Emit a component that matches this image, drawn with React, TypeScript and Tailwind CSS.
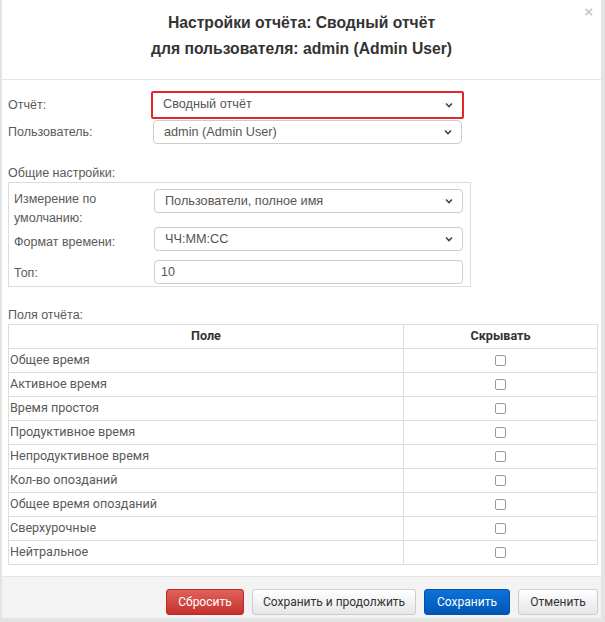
import React from "react";

const fields = [
  "Общее время",
  "Активное время",
  "Время простоя",
  "Продуктивное время",
  "Непродуктивное время",
  "Кол-во опозданий",
  "Общее время опозданий",
  "Сверхурочные",
  "Нейтральное",
];

function Chevron() {
  return (
    <svg width="10" height="10" viewBox="0 0 10 10" className="absolute right-[8px] top-1/2 -translate-y-1/2">
      <path d="M2 3.5 L5 6.5 L8 3.5" fill="none" stroke="#444" strokeWidth="1.6" />
    </svg>
  );
}

// select-like box
function SelectBox({ value, className = "" }: { value: string; className?: string }) {
  return (
    <div
      className={`relative h-[24px] w-[309px] rounded-[4px] border border-[#cccccc] bg-white pl-[10px] text-[12.7px] leading-[22px] text-[#555] ${className}`}
    >
      {value}
      <Chevron />
    </div>
  );
}

function Checkbox() {
  return <div className="mx-auto h-[11px] w-[11px] rounded-[2px] border border-[#999999] bg-white" />;
}

export default function App() {
  return (
    <div className="h-[622px] w-[605px] bg-[#e3e3e3] pl-[2px] pr-[4px] pb-[4px] font-['Liberation_Sans',Arial,sans-serif]">
      <div className="flex h-full flex-col bg-white">
        {/* header */}
        <div className="relative h-[80px] border-b border-[#e5e5e5] pt-[10px] text-center text-[15.7px] font-bold leading-[26px] text-[#333]">
          <div>Настройки отчёта: Сводный отчёт</div>
          <div>для пользователя: admin (Admin User)</div>
          <span className="absolute right-[8px] top-[4px] text-[15px] font-bold leading-none text-[#c8c8c8]">×</span>
        </div>

        {/* body */}
        <div className="flex-1 px-[6px] pt-[11px] text-[12.5px] text-[#5a5a5a]">
          <div className="flex items-center">
            <div className="w-[143px]">Отчёт:</div>
            <div className="rounded-[2px] border-2 border-[#e3262b]">
              <SelectBox value="Сводный отчёт" className="border-0 h-[24px]" />
            </div>
          </div>
          <div className="mt-[1px] flex items-center">
            <div className="w-[145px]">Пользователь:</div>
            <SelectBox value="admin (Admin User)" />
          </div>

          <div className="mt-[20px] leading-[18px]">Общие настройки:</div>
          <div className="w-[463px] border border-[#dddddd] px-[5px] pt-[6px] pb-[2px]">
            <div className="flex items-start">
              <div className="w-[140px] pt-[1px] leading-[19px]">
                Измерение по
                <br />
                умолчанию:
              </div>
              <SelectBox value="Пользователи, полное имя" />
            </div>
            <div className="mt-[-1px] flex items-center">
              <div className="w-[140px] pt-[6px]">Формат времени:</div>
              <SelectBox value="ЧЧ:ММ:СС" />
            </div>
            <div className="mt-[8px] flex items-center">
              <div className="w-[140px] pt-[4px]">Топ:</div>
              <div className="h-[24px] w-[309px] rounded-[4px] border border-[#cccccc] pl-[6px] leading-[22px] text-[#555]">10</div>
            </div>
          </div>

          <div className="mt-[20px] leading-[16px]">Поля отчёта:</div>
          <table className="mt-[1px] w-[590px] border-collapse border border-[#dddddd] font-['Roboto',Arial,sans-serif] text-[12.6px]">
            <thead>
              <tr className="h-[24px]">
                <th className="w-[395px] border border-[#dddddd] text-center font-bold text-[#333]">Поле</th>
                <th className="border border-[#dddddd] text-center font-bold text-[#333]">Скрывать</th>
              </tr>
            </thead>
            <tbody>
              {fields.map((f) => (
                <tr key={f} className="h-[24px]">
                  <td className="border border-[#dddddd] pl-[1px]">{f}</td>
                  <td className="border border-[#dddddd]">
                    <Checkbox />
                  </td>
                </tr>
              ))}
            </tbody>
          </table>
        </div>

        {/* footer */}
        <div className="flex h-[42px] items-start justify-end gap-[8px] border-t border-[#e5e5e5] bg-[#f3f3f3] pr-[3px] pt-[12px] font-['Roboto',Arial,sans-serif] text-[12px]">
          <button className="h-[26px] w-[78px] rounded-[3px] border border-[#b52b27] bg-gradient-to-b from-[#e0605a] to-[#c6302c] text-white">
            Сбросить
          </button>
          <button className="h-[26px] w-[164px] rounded-[3px] border border-[#cccccc] bg-gradient-to-b from-white to-[#e6e6e6] text-[#333]">
            Сохранить и продолжить
          </button>
          <button className="h-[26px] w-[86px] rounded-[3px] border border-[#0852a8] bg-gradient-to-b from-[#0c72d9] to-[#0257b5] text-white">
            Сохранить
          </button>
          <button className="h-[26px] w-[80px] rounded-[3px] border border-[#cccccc] bg-gradient-to-b from-white to-[#e6e6e6] text-[#333]">
            Отменить
          </button>
        </div>
      </div>
    </div>
  );
}
